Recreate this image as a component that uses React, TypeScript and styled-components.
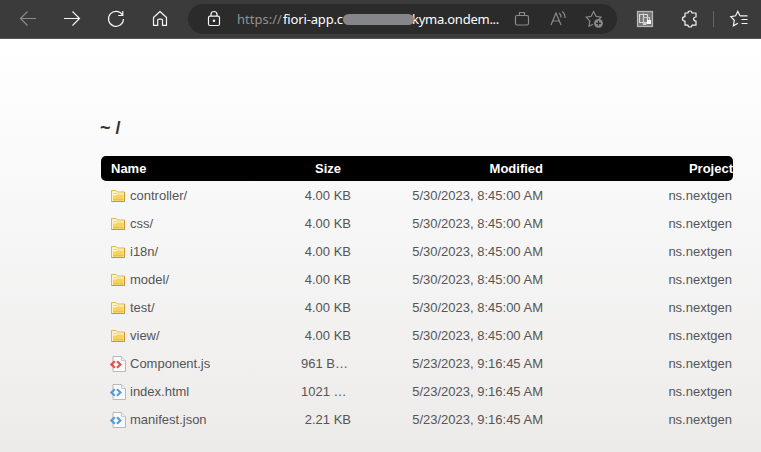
import React from "react";
import styled, { createGlobalStyle } from "styled-components";

const GlobalStyle = createGlobalStyle`
  html, body { margin: 0; padding: 0; height: 100%; overflow: hidden; }
  #root { height: 100%; }
  * { box-sizing: border-box; }
`;

const Window = styled.div`
  height: 452px;
  width: 761px;
  display: flex;
  flex-direction: column;
  overflow: hidden;
`;

const Toolbar = styled.header`
  height: 39px;
  flex: none;
  display: flex;
  align-items: flex-start;
  padding: 4px 0 0 18px;
  background: #3b3b3b;
  border-bottom: 1px solid #575454;
`;

const ToolButton = styled.button<{ $gap?: number; $dim?: boolean }>`
  width: 20px;
  height: 30px;
  flex: none;
  padding: 0;
  border: 0;
  margin: 0 ${(p) => p.$gap ?? 0}px 0 0;
  background: none;
  color: ${(p) => (p.$dim ? "#8a8a8a" : "#f4f4f4")};
  display: flex;
  align-items: center;
  justify-content: center;

  svg { display: block; fill: none; stroke: currentColor; stroke-width: 1.2; flex: none; }
`;

const AddressBar = styled.div`
  width: 429px;
  height: 30px;
  flex: none;
  display: flex;
  align-items: center;
  padding: 0 13px 0 16px;
  margin-right: 18px;
  border-radius: 15px;
  background: #2b2b2b;
`;

const Url = styled.div`
  width: 261px;
  margin: 0 14px 0 13px;
  display: flex;
  align-items: center;
  white-space: nowrap;
  font: 13px/20px "Noto Sans", "Open Sans", sans-serif;
  color: #fff;
`;

const UrlPart = styled.span<{ $width: number; $spacing: number; $muted?: boolean }>`
  width: ${(p) => p.$width}px;
  flex: none;
  letter-spacing: ${(p) => p.$spacing}px;
  color: ${(p) => (p.$muted ? "#929292" : "#fff")};
`;

const Redaction = styled.span`
  width: 71px;
  height: 11px;
  flex: none;
  margin: 1px -2px 0 -4px;
  border-radius: 6px;
  background: #85868a;
  position: relative;
`;

const Separator = styled.span`
  width: 1px;
  height: 16px;
  margin: 7px 15px 0 13px;
  background: #666;
  flex: none;
`;

const Page = styled.main`
  flex: 1;
  padding: 80px 28px 0 101px;
  background: linear-gradient(#ffffff, #f8f8f8 38%, #edebea);
  font: 13px/15px "Liberation Sans", Arial, sans-serif;
  color: #555;
`;

const Title = styled.h1`
  margin: 0 0 27px -1px;
  height: 10px;
  font: bold 18px/19px "Liberation Sans", Arial, sans-serif;
  color: #333;
`;

const Row = styled.li`
  display: grid;
  grid-template-columns: 200px 50px 192px 189px 1px;
  height: 28px;
  align-items: center;
  white-space: nowrap;
`;

const FileRow = styled(Row)`
  padding-bottom: 2px;
`;

const HeadRow = styled(Row)`
  height: 25px;
  margin-bottom: 1px;
  border-radius: 5px;
  background: #000;
  color: #fff;
  font-weight: bold;
`;

const List = styled.ul`
  list-style: none;
  margin: 0;
  padding: 0;
`;

const NameCell = styled.span<{ $head?: boolean }>`
  display: flex;
  align-items: center;
  height: 16px;
  padding-left: ${(p) => (p.$head ? 10 : 9)}px;
  gap: 4px;

  svg { display: block; flex: none; margin: 1px 0 -1px; }
`;

const Cell = styled.span<{ $align?: "left" | "right"; $inset?: number }>`
  text-align: ${(p) => p.$align ?? "right"};
  padding-right: ${(p) => p.$inset ?? 0}px;
`;

const ProjectHead = styled(Cell)`
  grid-column: 4 / 6;
`;

const FolderIcon = () => (
  <svg width="16" height="16" viewBox="0 0 16 16">
    <path d="M1.5 13.5v-11H6l1.5 1.5h7v9.5z" fill="#fff3c4" stroke="#dfb653" />
    <path d="M3 7.5h3l1-1h6.5v6H3z" fill="#f3d461" />
    <path d="M3 5.5h3.5L8 4.9h5.5" stroke="#f0d690" fill="none" />
    <path d="M3 11h10.5v1.5H3z" fill="#eec440" />
    <path d="M1.5 13.5h13V4.5" stroke="#cf9238" fill="none" />
  </svg>
);

const CodeIcon = ({ color }: { color: string }) => (
  <svg width="16" height="16" viewBox="0 0 16 16">
    <path d="M3 .5h8.5l4 4v11H3z" fill="#fafafa" stroke="#b9b9b9" />
    <path d="M11.5.5v4h4" fill="#eee" stroke="#c9c9c9" />
    <path d="M4.8 5.2L1.4 8.5l3.4 3.3M7 5.2l3.4 3.3L7 11.8" fill="none" stroke={color} strokeWidth="2.2" />
  </svg>
);

type Kind = "folder" | "js" | "code";
const icons: Record<Kind, React.ReactNode> = {
  folder: <FolderIcon />,
  js: <CodeIcon color="#e95048" />,
  code: <CodeIcon color="#559be0" />,
};

type FileEntry = { name: string; size: string; date: string; kind: Kind; cut?: boolean };

const folderDate = "5/30/2023, 8:45:00 AM";
const fileDate = "5/23/2023, 9:16:45 AM";
const files: FileEntry[] = [
  ...["controller/", "css/", "i18n/", "model/", "test/", "view/"].map((name) => ({
    name, size: "4.00 KB", date: folderDate, kind: "folder" as Kind,
  })),
  { name: "Component.js", size: "961 B…", date: fileDate, kind: "js", cut: true },
  { name: "index.html", size: "1021 …", date: fileDate, kind: "code", cut: true },
  { name: "manifest.json", size: "2.21 KB", date: fileDate, kind: "code" },
];

export default function App() {
  return (
    <Window>
      <GlobalStyle />
      <Toolbar>
        <ToolButton $gap={24} $dim aria-label="Back">
          <svg width="20" height="20" viewBox="0 0 20 20"><path d="M18 9.5H2.5M9.5 2.5l-7 7 7 7" /></svg>
        </ToolButton>
        <ToolButton $gap={24} aria-label="Forward">
          <svg width="20" height="20" viewBox="0 0 20 20"><path d="M2 9.5h15.5M10.5 2.5l7 7-7 7" /></svg>
        </ToolButton>
        <ToolButton $gap={24} aria-label="Reload">
          <svg width="20" height="20" viewBox="0 0 20 20"><path d="M16.6 6.3A7.5 7.5 0 1 0 17.5 10M16.8 2v4.5h-4.6" /></svg>
        </ToolButton>
        <ToolButton $gap={18} aria-label="Home">
          <svg width="20" height="20" viewBox="0 0 20 20"><path d="M3.5 8.5L10 2.5l6.5 6v7.9h-4v-5.3q0-1-1-1H8.7q-1 0-1 1v5.3H3.5z" strokeLinejoin="round" /></svg>
        </ToolButton>
        <AddressBar>
          <ToolButton aria-label="Site information">
            <svg width="20" height="20" viewBox="0 0 20 20"><rect x="4.5" y="7.2" width="11" height="9.3" rx="1.5" /><path d="M7 7V5.5a3 3 0 0 1 6 0V7" /><circle cx="10" cy="11.8" r=".7" fill="currentColor" /></svg>
          </ToolButton>
          <Url>
            <UrlPart $width={46} $spacing={0} $muted>https://</UrlPart>
            <UrlPart $width={64} $spacing={-0.15}>fiori-app.c</UrlPart>
            <Redaction />
            <UrlPart $width={88} $spacing={-0.25}>kyma.ondem...</UrlPart>
          </Url>
          <ToolButton $gap={16} $dim aria-label="Shopping">
            <svg width="20" height="20" viewBox="0 0 20 20"><rect x="3.5" y="6.5" width="13" height="9.5" rx="1.5" /><path d="M7.5 6.5v-3h5v3" /></svg>
          </ToolButton>
          <ToolButton $gap={16} $dim aria-label="Read aloud">
            <svg width="20" height="20" viewBox="0 0 20 20"><path d="M3 16L8 4l5 12M4.8 12h6.5M11.2 4q2 1.7 1.8 4.5M14.2 2.5q3.2 2.6 2.8 6.5" /></svg>
          </ToolButton>
          <ToolButton $dim aria-label="Add favourite">
            <svg width="20" height="20" viewBox="0 0 20 20">
              <path d="M9 15.2l-4 2 .8-5.3-3.6-3.8 5-.8L9.6 2.5l2.4 4.8 5 .8-1.8 1.9" />
              <circle cx="14.5" cy="14.3" r="4.4" fill="currentColor" stroke="none" />
              <path d="M14.5 11.8v5M12 14.3h5" stroke="#2b2b2b" />
            </svg>
          </ToolButton>
        </AddressBar>
        <ToolButton $gap={25} aria-label="Extension">
          <svg width="20" height="20" viewBox="0 0 20 20" stroke="none">
            <rect x="2.5" y="2.5" width="15" height="15" fill="#777" stroke="#bbb" />
            <path d="M4.5 5.5h8v8h-8zM8.5 4.5v11h3" fill="none" stroke="#d8d8d8" />
            <path d="M8.5 8.5h6v6h-6z" fill="none" stroke="#c8c8c8" /><path d="M12 11h4v4h-4z" fill="#fff" stroke="none" />
          </svg>
        </ToolButton>
        <ToolButton aria-label="Extensions">
          <svg width="20" height="20" viewBox="0 0 20 20"><path d="M5 4h3q0-2 2-2t2 2h4v4q-2.4 0-2.4 2t2.4 2v4.2h-4q0 1.8-2 1.8t-2-1.8H5v-4.1q-2.5 0-2.5-2.2T5 7.7z" strokeLinejoin="round" /></svg>
        </ToolButton>
        <Separator />
        <ToolButton aria-label="Favourites">
          <svg width="20" height="20" viewBox="0 0 20 20"><path d="M11 6.8h7.5M12.5 10.5h6M12.5 14.5h6M10.8 6.5L8.8 2.3 6.6 6.8l-4.8.8 3.5 3.7-.9 5.5 4.5-2.5M11 6.5l-.4.1" /></svg>
        </ToolButton>
      </Toolbar>
      <Page>
        <Title>~ /</Title>
        <List>
          <HeadRow>
            <NameCell $head>Name</NameCell>
            <Cell $inset={10}>Size</Cell>
            <Cell>Modified</Cell>
            <ProjectHead>Project</ProjectHead>
          </HeadRow>
          {files.map((f) => (
            <FileRow key={f.name}>
              <NameCell>{icons[f.kind]}{f.name}</NameCell>
              <Cell $align={f.cut ? "left" : "right"}>{f.size}</Cell>
              <Cell>{f.date}</Cell>
              <Cell>ns.nextgen</Cell>
            </FileRow>
          ))}
        </List>
      </Page>
    </Window>
  );
}
